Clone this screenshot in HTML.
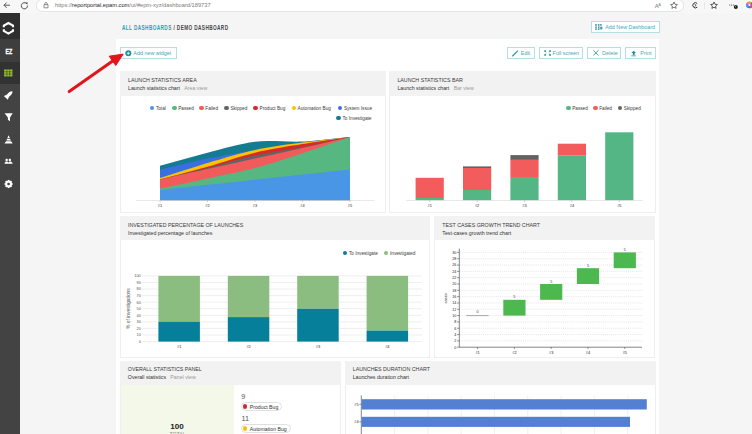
<!DOCTYPE html>
<html><head><meta charset="utf-8">
<style>
*{margin:0;padding:0;box-sizing:border-box}
html,body{width:752px;height:434px;overflow:hidden;background:#f5f5f5;font-family:"Liberation Sans",sans-serif;position:relative}
.a{position:absolute;white-space:nowrap}
#toolbar{left:0;top:0;width:752px;height:13px;background:#f7f7f7}
#pill{left:36px;top:-0.6px;width:647.5px;height:12.4px;background:#fff;border-radius:6px;border:1px solid #e4e4e4}
#url{left:55px;top:1px;font-size:5.7px;line-height:8px;color:#7a7a7a}
#url b{color:#1e1e1e;font-weight:normal}
#sidebar{left:0;top:13.4px;width:19.5px;height:421px;background:#434343}
#panel{left:116px;top:39px;width:543px;height:395px;background:#fff}
.btn{position:absolute;height:12px;border:1px solid #b8dee5;background:#fff;color:#48a7ba;font-size:5.4px;line-height:10px;white-space:nowrap}
.btn svg{position:absolute}
.btn span{position:absolute;top:0}
.w{position:absolute;background:#fff;border:1px solid #efefef}
.wh{position:absolute;left:-1px;top:-1px;right:-1px;height:25px;background:#f2f2f2}
.wt{position:absolute;left:7px;top:4.6px;font-size:5.3px;line-height:7px;color:#3a3a3a;white-space:nowrap}
.ws{position:absolute;left:7px;top:12.7px;font-size:5.25px;line-height:7px;color:#333;white-space:nowrap}
.ws span{color:#9a9a9a;margin-left:4.3px}
.lg{position:absolute;font-size:4.7px;line-height:6px;color:#3a3a3a;white-space:nowrap;margin-top:0.9px}
.dot{position:absolute;width:4.4px;height:4.4px;border-radius:50%;margin:-0.2px 0 0 -0.2px}
svg.c{position:absolute;left:0;top:0;width:752px;height:434px}
.t4{font-size:3.6px;fill:#444;font-family:"Liberation Sans",sans-serif}
</style></head><body>
<div id="toolbar" class="a"></div>
<div id="pill" class="a"></div>
<div id="url" class="a">https://<b>reportportal.epam.com</b>/ui/#epm-xyz/dashboard/189737</div>
<svg class="c" style="z-index:2">
  <!-- back arrow -->
  <path d="M4,5.2H10M4,5.2L6.6,2.6M4,5.2L6.6,7.8" stroke="#444" stroke-width="0.9" fill="none"/>
  <!-- reload -->
  <path d="M26.6,3.6A3.1,3.1 0 1 0 27.5,5.6" stroke="#444" stroke-width="0.9" fill="none"/>
  <path d="M25.2,2.6L27.6,2.4L27.4,4.8Z" fill="#444"/>
  <!-- lock -->
  <path d="M44,4.6h4v3.2h-4z" stroke="#666" stroke-width="0.7" fill="none"/>
  <path d="M44.8,4.6v-0.9a1.2,1.2 0 0 1 2.4,0v0.9" stroke="#666" stroke-width="0.7" fill="none"/>
  <!-- A aa -->
  <text x="654.8" y="8.3" font-size="6" fill="#777" font-family="Liberation Sans">A</text>
  <text x="658.6" y="5.6" font-size="3.5" fill="#777" font-family="Liberation Sans">A</text>
  <!-- star -->
  <path d="M674,2L675,4.3L677.4,4.5L675.6,6.1L676.1,8.4L674,7.2L671.9,8.4L672.4,6.1L670.6,4.5L673,4.3Z" stroke="#444" stroke-width="0.7" fill="none"/>
  <!-- icon -->
  <path d="M697.2,3.4A2.6,2.6 0 1 0 697.2,7.2" stroke="#333" stroke-width="1" fill="none"/>
  <path d="M694.6,4.2L696.2,5.3L694.6,6.4" stroke="#333" stroke-width="0.8" fill="none"/>
  <line x1="704.5" y1="2" x2="704.5" y2="9" stroke="#ddd" stroke-width="0.6"/>
  <!-- star list -->
  <path d="M714,2L715,4.3L717.4,4.5L715.6,6.1L716.1,8.4L714,7.2L711.9,8.4L712.4,6.1L710.6,4.5L713,4.3Z" stroke="#333" stroke-width="0.8" fill="none"/>
  <!-- dots -->
  <circle cx="729.8" cy="5" r="0.55" fill="#333"/><circle cx="731.6" cy="5" r="0.55" fill="#333"/><circle cx="733.4" cy="5" r="0.55" fill="#333"/>
  <circle cx="735.8" cy="7" r="2" fill="#1a1a1a"/><rect x="735.55" y="5.8" width="0.5" height="1.5" fill="#fff"/>
  <!-- copilot -->
  <circle cx="749.5" cy="5" r="3.3" fill="#7b5cf0"/>
  <path d="M746.5,3.5A3.3,3.3 0 0 1 751.5,2.3L749.5,5Z" fill="#f0a020"/>
  <path d="M752.5,4A3.3,3.3 0 0 1 750.5,8.2L749.5,5Z" fill="#e83e8c"/>
  <path d="M748,8A3.3,3.3 0 0 1 746.3,4.6L749.5,5Z" fill="#2ea0f0"/>
  <circle cx="749.5" cy="5" r="1.1" fill="#fff"/>
</svg>

<div id="sidebar" class="a">
  <div class="a" style="left:0;top:0;width:20px;height:25.5px;background:#2f2f2f"></div>
  <div class="a" style="left:0;top:25.5px;width:20px;height:23px;background:#3e3e3e"></div>
  <div class="a" style="left:0;top:48.5px;width:20px;height:22.2px;background:#323232"></div>
</div>
<svg class="c" style="z-index:2">
  <!-- logo -->
  <path d="M3.8,27.3V25.7L8.4,23L13,25.7V27.3M3.8,29.2V30.9L8.4,33.6L13,30.9V29.2" fill="none" stroke="#fff" stroke-width="2.1" stroke-linejoin="miter"/>
  <!-- EZ -->
  <text x="0" y="0" font-size="7.2" font-weight="bold" fill="#fff" stroke="#fff" stroke-width="0.35" text-anchor="middle" font-family="Liberation Sans" transform="translate(8.8,53.9) scale(0.74,1)">EZ</text>
  <!-- grid -->
  <g fill="#9cc43a">
    <rect x="4.1" y="69.5" width="8.3" height="6.9"/>
  </g>
  <g stroke="#35401c" stroke-width="0.6">
    <line x1="6.9" y1="69.5" x2="6.9" y2="76.4"/><line x1="9.65" y1="69.5" x2="9.65" y2="76.4"/>
    <line x1="4.1" y1="71.8" x2="12.4" y2="71.8"/><line x1="4.1" y1="74.1" x2="12.4" y2="74.1"/>
  </g>
  <!-- rocket -->
  <g transform="translate(8.7,95) rotate(45) scale(0.92)">
    <path d="M0,-5.8C1.9,-4.2 2,-1.2 1.7,1.4L3,4.4H-3L-1.7,1.4C-2,-1.2 -1.9,-4.2 0,-5.8Z" fill="#fff"/>
  </g>
  <!-- filter -->
  <path d="M4.6,113.3H12.7L10,117.4V121.2L7.9,119.8V117.4Z" fill="#fff"/>
  <!-- pyramid -->
  <path d="M8.6,135.3L9.8,138H7.4Z M7.1,138.8H10.1L10.8,140.6H6.4Z M6.1,141.3H11.1L12.7,143.5H4.5Z" fill="#fff"/>
  <!-- people -->
  <rect x="5.6" y="158.8" width="2.1" height="2.2" rx="0.6" fill="#fff"/><rect x="8.8" y="158.8" width="2.1" height="2.2" rx="0.6" fill="#fff"/>
  <path d="M4.6,163.7C4.7,162.1 5.6,161.6 6.6,161.6C7.6,161.6 8.5,162.1 8.6,163.7Z M8.3,163.7C8.4,162.1 9.3,161.6 10.2,161.6C11.2,161.6 12.1,162.1 12.7,163.7Z" fill="#fff"/>
  <!-- gear -->
  <g transform="translate(8.6,184)">
    <circle r="2.45" fill="none" stroke="#fff" stroke-width="1.9"/>
    <g fill="#fff"><rect x="-0.8" y="-4.1" width="1.6" height="8.2"/><rect x="-0.8" y="-4.1" width="1.6" height="8.2" transform="rotate(45)"/><rect x="-0.8" y="-4.1" width="1.6" height="8.2" transform="rotate(90)"/><rect x="-0.8" y="-4.1" width="1.6" height="8.2" transform="rotate(135)"/></g>
    <circle r="1.35" fill="#434343"/>
  </g>
</svg>

<div id="panel" class="a"></div>

<div class="a" style="left:121.7px;top:23.5px;font-size:6.3px;line-height:8px;font-weight:bold;color:#474747;transform-origin:0 0;transform:scaleX(0.745);letter-spacing:0.55px"><span style="color:#2a9fb6">ALL DASHBOARDS</span> / DEMO DASHBOARD</div>

<div class="btn" style="left:591px;top:21.2px;width:69px;height:11.6px">
  <svg style="left:3.2px;top:2px" width="10" height="8"><g fill="#2a8597"><rect x="0.2" y="0.2" width="1.6" height="1.5"/><rect x="2.9" y="0.2" width="1.6" height="1.5"/><rect x="5.1" y="0.2" width="1.6" height="1.5"/><rect x="0.2" y="2.5" width="1.6" height="1.3"/><rect x="2.9" y="2.5" width="1.6" height="1.3"/><rect x="0.2" y="4.4" width="1.6" height="1.4"/><rect x="2.9" y="4.4" width="1.6" height="1.4"/><path d="M5.6,2.5H6.6V3.6H7.8V4.6H6.6V5.8H5.6V4.6H4.9V3.6H5.6Z"/></g></svg>
  <span style="left:13.2px">Add New Dashboard</span></div>
<div class="btn" style="left:120px;top:47px;width:57px;height:11.8px">
  <svg style="left:3.5px;top:1.5px" width="7" height="7"><circle cx="3.3" cy="3.3" r="3" fill="#1d8da3"/><path d="M3.3,1.8V4.8M1.8,3.3H4.8" stroke="#fff" stroke-width="0.8"/></svg>
  <span style="left:12.3px">Add new widget</span></div>
<div class="btn" style="left:507px;top:47px;width:28px;height:12px">
  <svg style="left:3.8px;top:1.5px" width="8" height="8"><path d="M0.7,5.9L4.7,1.9" stroke="#1d8da3" stroke-width="1.3" stroke-linecap="round"/><path d="M5.2,1.4L5.9,0.7" stroke="#1d8da3" stroke-width="1.1"/></svg>
  <span style="left:12.8px">Edit</span></div>
<div class="btn" style="left:538.5px;top:47px;width:44.5px;height:12px">
  <svg style="left:4px;top:1.5px" width="8" height="7"><g fill="#1d8da3"><path d="M0.3,0.3H2.3L1.6,1L2.5,1.9L1.9,2.5L1,1.6L0.3,2.3Z"/><path d="M6.9,0.3H4.9L5.6,1L4.7,1.9L5.3,2.5L6.2,1.6L6.9,2.3Z"/><path d="M0.3,5.7H2.3L1.6,5L2.5,4.1L1.9,3.5L1,4.4L0.3,3.7Z"/><path d="M6.9,5.7H4.9L5.6,5L4.7,4.1L5.3,3.5L6.2,4.4L6.9,3.7Z"/></g></svg>
  <span style="left:13.1px">Full screen</span></div>
<div class="btn" style="left:587.3px;top:47px;width:34px;height:12px">
  <svg style="left:4.6px;top:2.1px" width="7" height="7"><path d="M0.3,0.3L5.4,5.5M5.4,0.3L0.3,5.5" stroke="#1d8da3" stroke-width="0.8"/></svg>
  <span style="left:13.8px">Delete</span></div>
<div class="btn" style="left:625.3px;top:47px;width:30.6px;height:11.6px">
  <svg style="left:5px;top:1.6px" width="7" height="7"><path d="M2.7,0.7L5,3H3.6V4.9H1.8V3H0.4Z" fill="#1d8da3"/><rect x="0.3" y="5.5" width="4.8" height="0.75" fill="#1d8da3"/></svg>
  <span style="left:14px">Print</span></div>

<!-- arrow -->
<svg class="c" style="z-index:3">
  <line x1="69.2" y1="91.6" x2="113" y2="60.8" stroke="#e3141a" stroke-width="3" stroke-linecap="round"/>
  <path d="M123.2,54.1L109.2,56.2L115.8,65.5Z" fill="#e3141a" stroke="#e3141a" stroke-width="1" stroke-linejoin="round"/>
</svg>

<!-- W1 -->
<div class="w" style="left:120px;top:71px;width:266px;height:142px"><div class="wh"></div><div class="wt">LAUNCH STATISTICS AREA</div><div class="ws">Launch statistics chart<span>Area view</span></div></div>
<!-- W2 -->
<div class="w" style="left:389.4px;top:71px;width:266.2px;height:141.6px"><div class="wh"></div><div class="wt">LAUNCH STATISTICS BAR</div><div class="ws">Launch statistics chart<span>Bar view</span></div></div>
<!-- W3 -->
<div class="w" style="left:120px;top:216px;width:310.4px;height:142px"><div class="wh" style="height:24px"></div><div class="wt">INVESTIGATED PERCENTAGE OF LAUNCHES</div><div class="ws">Investigated percentage of launches</div></div>
<!-- W4 -->
<div class="w" style="left:434.3px;top:216px;width:221px;height:142px"><div class="wh" style="height:24px"></div><div class="wt">TEST CASES GROWTH TREND CHART</div><div class="ws">Test-cases growth trend chart</div></div>
<!-- W5 -->
<div class="w" style="left:119.8px;top:360.6px;width:220.8px;height:80px"><div class="wh" style="height:24.1px"></div><div class="wt" style="top:4.3px">OVERALL STATISTICS PANEL</div><div class="ws" style="top:12.3px">Overall statistics<span>Panel view</span></div></div>
<!-- W6 -->
<div class="w" style="left:344.7px;top:360.6px;width:311px;height:80px"><div class="wh" style="height:24.1px"></div><div class="wt" style="top:4.3px">LAUNCHES DURATION CHART</div><div class="ws" style="top:12.3px">Launches duration chart</div></div>


<!-- legends -->
<div class="dot" style="left:149.9px;top:106px;background:#4a96e6"></div><div class="lg" style="left:155.9px;top:105px">Total</div>
<div class="dot" style="left:172.5px;top:106px;background:#57b780"></div><div class="lg" style="left:178.2px;top:105px">Passed</div>
<div class="dot" style="left:199.6px;top:106px;background:#f25b5b"></div><div class="lg" style="left:205.3px;top:105px">Failed</div>
<div class="dot" style="left:224.4px;top:106px;background:#646464"></div><div class="lg" style="left:230.4px;top:105px">Skipped</div>
<div class="dot" style="left:253.5px;top:106px;background:#d42a2a"></div><div class="lg" style="left:259.5px;top:105px">Product Bug</div>
<div class="dot" style="left:291.7px;top:106px;background:#fbc200"></div><div class="lg" style="left:297.5px;top:105px">Automation Bug</div>
<div class="dot" style="left:337.9px;top:106px;background:#3a6fe2"></div><div class="lg" style="left:343.9px;top:105px">System Issue</div>
<div class="dot" style="left:336.5px;top:116.2px;background:#137c91"></div><div class="lg" style="left:342.5px;top:115.2px">To Investigate</div>

<div class="dot" style="left:566.4px;top:106px;background:#55b685"></div><div class="lg" style="left:572.2px;top:105px">Passed</div>
<div class="dot" style="left:593.4px;top:106px;background:#f25c5c"></div><div class="lg" style="left:599.2px;top:105px">Failed</div>
<div class="dot" style="left:618px;top:106px;background:#626262"></div><div class="lg" style="left:623.8px;top:105px">Skipped</div>

<div class="dot" style="left:343.1px;top:250.7px;background:#06809a"></div><div class="lg" style="left:348.9px;top:249.7px">To Investigate</div>
<div class="dot" style="left:384.2px;top:250.7px;background:#8bbc80"></div><div class="lg" style="left:390px;top:249.7px">Investigated</div>

<!-- overall stats -->
<div class="a" style="left:120.8px;top:384.6px;width:113px;height:50px;background:#f3f8e9"></div>
<div class="a" style="left:170.2px;top:421.8px;font-size:8.1px;line-height:9px;font-weight:bold;color:#222">100</div>
<div class="a" style="left:169.8px;top:431.8px;font-size:4.6px;line-height:6px;color:#888;letter-spacing:0.3px">TOTAL</div>
<div class="a" style="left:241.3px;top:392.6px;font-size:7.2px;line-height:8px;color:#555">9</div>
<div class="a" style="left:241.3px;top:402.3px;width:40.5px;height:9.2px;border:0.7px solid #e0e0e0;border-radius:5px;background:#fff"></div>
<div class="dot" style="left:243.4px;top:404.5px;width:4.2px;height:4.2px;background:#d42a2a"></div>
<div class="a" style="left:249.8px;top:403.5px;font-size:5.2px;line-height:7px;color:#333">Product Bug</div>
<div class="a" style="left:241.4px;top:414.8px;font-size:7.3px;line-height:8px;color:#555">11</div>
<div class="a" style="left:241.3px;top:424px;width:49.3px;height:9.4px;border:0.7px solid #e0e0e0;border-radius:5px;background:#fff"></div>
<div class="dot" style="left:243.4px;top:426.5px;width:4.2px;height:4.2px;background:#fbc200"></div>
<div class="a" style="left:249.8px;top:425.5px;font-size:5.2px;line-height:7px;color:#333">Automation Bug</div>

<!-- charts -->
<svg class="c" style="z-index:4">
<path fill="#137c91" d="M160,165.8Q198,155.11,207.5,152.7C221.75,149.08,240.75,143.36,255,141.7S288.25,142.31,302.5,141.6Q312,141.13,350,137L350,200.5L160,200.5Z"/>
<path fill="#3a6fe2" d="M160,169.7Q198,160.58,207.5,158.6C221.75,155.63,240.75,152.33,255,149.9S288.25,144.34,302.5,142.4Q312,141.11,350,137L350,200.5L160,200.5Z"/>
<path fill="#fbc200" d="M160,177.9Q198,165.7,207.5,162.9C221.75,158.7,240.75,152.95,255,149.9S288.25,144.53,302.5,142.6Q312,141.31,350,137L350,200.5L160,200.5Z"/>
<path fill="#d42a2a" d="M160,179.4Q198,169.37,207.5,166.7C221.75,162.69,240.75,156.09,255,152.7S288.25,146.45,302.5,144.1Q312,142.53,350,137L350,200.5L160,200.5Z"/>
<path fill="#646464" d="M160,179.4Q198,170.38,207.5,168C221.75,164.43,240.75,158.72,255,155.6S288.25,149.99,302.5,147.2Q312,145.34,350,137L350,200.5L160,200.5Z"/>
<path fill="#f25b5b" d="M160,179.4Q198,171.19,207.5,169.1C221.75,165.97,240.75,161.66,255,158.5S288.25,151.22,302.5,148Q312,145.85,350,137L350,200.5L160,200.5Z"/>
<path fill="#57b780" d="M160,188.6Q198,180.56,207.5,178.5C221.75,175.41,240.75,171.8,255,168S288.25,157.85,302.5,153.2Q312,150.1,350,137L350,200.5L160,200.5Z"/>
<path fill="#4a96e6" d="M160,190Q198,185.88,207.5,184.85C221.75,183.3,240.75,181.24,255,179.7S288.25,176.09,302.5,174.55Q312,173.52,350,169.4L350,200.5L160,200.5Z"/>
<line x1="136" y1="200.5" x2="374" y2="200.5" stroke="#dedede" stroke-width="0.7"/>
<line x1="160" y1="200.5" x2="160" y2="202" stroke="#999" stroke-width="0.5"/>
<text x="160" y="207" font-size="3.9" fill="#222" text-anchor="middle" font-family="Liberation Sans">#1</text>
<line x1="207.5" y1="200.5" x2="207.5" y2="202" stroke="#999" stroke-width="0.5"/>
<text x="207.5" y="207" font-size="3.9" fill="#222" text-anchor="middle" font-family="Liberation Sans">#2</text>
<line x1="255" y1="200.5" x2="255" y2="202" stroke="#999" stroke-width="0.5"/>
<text x="255" y="207" font-size="3.9" fill="#222" text-anchor="middle" font-family="Liberation Sans">#3</text>
<line x1="302.5" y1="200.5" x2="302.5" y2="202" stroke="#999" stroke-width="0.5"/>
<text x="302.5" y="207" font-size="3.9" fill="#222" text-anchor="middle" font-family="Liberation Sans">#4</text>
<line x1="350" y1="200.5" x2="350" y2="202" stroke="#999" stroke-width="0.5"/>
<text x="350" y="207" font-size="3.9" fill="#222" text-anchor="middle" font-family="Liberation Sans">#5</text>
<rect x="415.6" y="177.8" width="28.2" height="20.2" fill="#f25c5c"/>
<rect x="415.6" y="198" width="28.2" height="2.4" fill="#55b685"/>
<rect x="463" y="166.4" width="28.2" height="1.6" fill="#626262"/>
<rect x="463" y="168" width="28.2" height="22" fill="#f25c5c"/>
<rect x="463" y="190" width="28.2" height="10.4" fill="#55b685"/>
<rect x="510.4" y="155.1" width="28.2" height="4.8" fill="#626262"/>
<rect x="510.4" y="159.9" width="28.2" height="18" fill="#f25c5c"/>
<rect x="510.4" y="177.9" width="28.2" height="22.5" fill="#55b685"/>
<rect x="557.8" y="143.7" width="28.2" height="12" fill="#f25c5c"/>
<rect x="557.8" y="155.7" width="28.2" height="44.7" fill="#55b685"/>
<rect x="605.2" y="132.3" width="28.2" height="68.1" fill="#55b685"/>
<line x1="406" y1="200.5" x2="643" y2="200.5" stroke="#dedede" stroke-width="0.7"/>
<line x1="429.7" y1="200.5" x2="429.7" y2="202" stroke="#999" stroke-width="0.5"/>
<text x="429.7" y="207" font-size="3.9" fill="#222" text-anchor="middle" font-family="Liberation Sans">#1</text>
<line x1="477.1" y1="200.5" x2="477.1" y2="202" stroke="#999" stroke-width="0.5"/>
<text x="477.1" y="207" font-size="3.9" fill="#222" text-anchor="middle" font-family="Liberation Sans">#2</text>
<line x1="524.5" y1="200.5" x2="524.5" y2="202" stroke="#999" stroke-width="0.5"/>
<text x="524.5" y="207" font-size="3.9" fill="#222" text-anchor="middle" font-family="Liberation Sans">#3</text>
<line x1="571.9" y1="200.5" x2="571.9" y2="202" stroke="#999" stroke-width="0.5"/>
<text x="571.9" y="207" font-size="3.9" fill="#222" text-anchor="middle" font-family="Liberation Sans">#4</text>
<line x1="619.3" y1="200.5" x2="619.3" y2="202" stroke="#999" stroke-width="0.5"/>
<text x="619.3" y="207" font-size="3.9" fill="#222" text-anchor="middle" font-family="Liberation Sans">#5</text>
<line x1="142" y1="341.6" x2="422" y2="341.6" stroke="#e3e3e3" stroke-width="0.6"/>
<text x="140.8" y="343" font-size="3.9" fill="#555" text-anchor="end" font-family="Liberation Sans">0</text>
<line x1="142" y1="335.03" x2="422" y2="335.03" stroke="#e3e3e3" stroke-width="0.6"/>
<text x="140.8" y="336.43" font-size="3.9" fill="#555" text-anchor="end" font-family="Liberation Sans">10</text>
<line x1="142" y1="328.46" x2="422" y2="328.46" stroke="#e3e3e3" stroke-width="0.6"/>
<text x="140.8" y="329.86" font-size="3.9" fill="#555" text-anchor="end" font-family="Liberation Sans">20</text>
<line x1="142" y1="321.89" x2="422" y2="321.89" stroke="#e3e3e3" stroke-width="0.6"/>
<text x="140.8" y="323.29" font-size="3.9" fill="#555" text-anchor="end" font-family="Liberation Sans">30</text>
<line x1="142" y1="315.32" x2="422" y2="315.32" stroke="#e3e3e3" stroke-width="0.6"/>
<text x="140.8" y="316.72" font-size="3.9" fill="#555" text-anchor="end" font-family="Liberation Sans">40</text>
<line x1="142" y1="308.75" x2="422" y2="308.75" stroke="#e3e3e3" stroke-width="0.6"/>
<text x="140.8" y="310.15" font-size="3.9" fill="#555" text-anchor="end" font-family="Liberation Sans">50</text>
<line x1="142" y1="302.18" x2="422" y2="302.18" stroke="#e3e3e3" stroke-width="0.6"/>
<text x="140.8" y="303.58" font-size="3.9" fill="#555" text-anchor="end" font-family="Liberation Sans">60</text>
<line x1="142" y1="295.61" x2="422" y2="295.61" stroke="#e3e3e3" stroke-width="0.6"/>
<text x="140.8" y="297.01" font-size="3.9" fill="#555" text-anchor="end" font-family="Liberation Sans">70</text>
<line x1="142" y1="289.04" x2="422" y2="289.04" stroke="#e3e3e3" stroke-width="0.6"/>
<text x="140.8" y="290.44" font-size="3.9" fill="#555" text-anchor="end" font-family="Liberation Sans">80</text>
<line x1="142" y1="282.47" x2="422" y2="282.47" stroke="#e3e3e3" stroke-width="0.6"/>
<text x="140.8" y="283.87" font-size="3.9" fill="#555" text-anchor="end" font-family="Liberation Sans">90</text>
<line x1="142" y1="275.9" x2="422" y2="275.9" stroke="#e3e3e3" stroke-width="0.6"/>
<text x="140.8" y="277.3" font-size="3.9" fill="#555" text-anchor="end" font-family="Liberation Sans">100</text>
<rect x="158.4" y="275.9" width="41.5" height="45.8" fill="#8bbc80"/>
<rect x="158.4" y="321.7" width="41.5" height="19.9" fill="#06809a"/>
<text x="179.15" y="348.3" font-size="3.9" fill="#222" text-anchor="middle" font-family="Liberation Sans">#1</text>
<rect x="227.8" y="275.9" width="41.5" height="41.2" fill="#8bbc80"/>
<rect x="227.8" y="317.1" width="41.5" height="24.5" fill="#06809a"/>
<text x="248.55" y="348.3" font-size="3.9" fill="#222" text-anchor="middle" font-family="Liberation Sans">#2</text>
<rect x="297.2" y="275.9" width="41.5" height="32.9" fill="#8bbc80"/>
<rect x="297.2" y="308.8" width="41.5" height="32.8" fill="#06809a"/>
<text x="317.95" y="348.3" font-size="3.9" fill="#222" text-anchor="middle" font-family="Liberation Sans">#3</text>
<rect x="366.6" y="275.9" width="41.5" height="54.7" fill="#8bbc80"/>
<rect x="366.6" y="330.6" width="41.5" height="11" fill="#06809a"/>
<text x="387.35" y="348.3" font-size="3.9" fill="#222" text-anchor="middle" font-family="Liberation Sans">#4</text>
<text x="0" y="0" font-size="4.9" fill="#555" text-anchor="middle" font-family="Liberation Sans" transform="translate(129.6,308.6) rotate(-90)">% of investigations</text>
<g stroke="#cfcfcf" stroke-width="0.55" stroke-dasharray="1,1.1">
<line x1="460" y1="340.88" x2="643" y2="340.88"/>
<line x1="460" y1="334.56" x2="643" y2="334.56"/>
<line x1="460" y1="328.24" x2="643" y2="328.24"/>
<line x1="460" y1="321.92" x2="643" y2="321.92"/>
<line x1="460" y1="315.6" x2="643" y2="315.6"/>
<line x1="460" y1="309.28" x2="643" y2="309.28"/>
<line x1="460" y1="302.96" x2="643" y2="302.96"/>
<line x1="460" y1="296.64" x2="643" y2="296.64"/>
<line x1="460" y1="290.32" x2="643" y2="290.32"/>
<line x1="460" y1="284" x2="643" y2="284"/>
<line x1="460" y1="277.68" x2="643" y2="277.68"/>
<line x1="460" y1="271.36" x2="643" y2="271.36"/>
<line x1="460" y1="265.04" x2="643" y2="265.04"/>
<line x1="460" y1="258.72" x2="643" y2="258.72"/>
<line x1="460" y1="252.4" x2="643" y2="252.4"/>
</g>
<line x1="459.3" y1="248.6" x2="459.3" y2="347.2" stroke="#333" stroke-width="0.6"/>
<line x1="459.3" y1="347.2" x2="642" y2="347.2" stroke="#333" stroke-width="0.6"/>
<line x1="457" y1="347.2" x2="459.3" y2="347.2" stroke="#333" stroke-width="0.5"/>
<text x="456.3" y="348.55" font-size="3.7" fill="#1a1a1a" text-anchor="end" font-family="Liberation Sans">0</text>
<line x1="457" y1="340.88" x2="459.3" y2="340.88" stroke="#333" stroke-width="0.5"/>
<text x="456.3" y="342.23" font-size="3.7" fill="#1a1a1a" text-anchor="end" font-family="Liberation Sans">2</text>
<line x1="457" y1="334.56" x2="459.3" y2="334.56" stroke="#333" stroke-width="0.5"/>
<text x="456.3" y="335.91" font-size="3.7" fill="#1a1a1a" text-anchor="end" font-family="Liberation Sans">4</text>
<line x1="457" y1="328.24" x2="459.3" y2="328.24" stroke="#333" stroke-width="0.5"/>
<text x="456.3" y="329.59" font-size="3.7" fill="#1a1a1a" text-anchor="end" font-family="Liberation Sans">6</text>
<line x1="457" y1="321.92" x2="459.3" y2="321.92" stroke="#333" stroke-width="0.5"/>
<text x="456.3" y="323.27" font-size="3.7" fill="#1a1a1a" text-anchor="end" font-family="Liberation Sans">8</text>
<line x1="457" y1="315.6" x2="459.3" y2="315.6" stroke="#333" stroke-width="0.5"/>
<text x="456.3" y="316.95" font-size="3.7" fill="#1a1a1a" text-anchor="end" font-family="Liberation Sans">10</text>
<line x1="457" y1="309.28" x2="459.3" y2="309.28" stroke="#333" stroke-width="0.5"/>
<text x="456.3" y="310.63" font-size="3.7" fill="#1a1a1a" text-anchor="end" font-family="Liberation Sans">12</text>
<line x1="457" y1="302.96" x2="459.3" y2="302.96" stroke="#333" stroke-width="0.5"/>
<text x="456.3" y="304.31" font-size="3.7" fill="#1a1a1a" text-anchor="end" font-family="Liberation Sans">14</text>
<line x1="457" y1="296.64" x2="459.3" y2="296.64" stroke="#333" stroke-width="0.5"/>
<text x="456.3" y="297.99" font-size="3.7" fill="#1a1a1a" text-anchor="end" font-family="Liberation Sans">16</text>
<line x1="457" y1="290.32" x2="459.3" y2="290.32" stroke="#333" stroke-width="0.5"/>
<text x="456.3" y="291.67" font-size="3.7" fill="#1a1a1a" text-anchor="end" font-family="Liberation Sans">18</text>
<line x1="457" y1="284" x2="459.3" y2="284" stroke="#333" stroke-width="0.5"/>
<text x="456.3" y="285.35" font-size="3.7" fill="#1a1a1a" text-anchor="end" font-family="Liberation Sans">20</text>
<line x1="457" y1="277.68" x2="459.3" y2="277.68" stroke="#333" stroke-width="0.5"/>
<text x="456.3" y="279.03" font-size="3.7" fill="#1a1a1a" text-anchor="end" font-family="Liberation Sans">22</text>
<line x1="457" y1="271.36" x2="459.3" y2="271.36" stroke="#333" stroke-width="0.5"/>
<text x="456.3" y="272.71" font-size="3.7" fill="#1a1a1a" text-anchor="end" font-family="Liberation Sans">24</text>
<line x1="457" y1="265.04" x2="459.3" y2="265.04" stroke="#333" stroke-width="0.5"/>
<text x="456.3" y="266.39" font-size="3.7" fill="#1a1a1a" text-anchor="end" font-family="Liberation Sans">26</text>
<line x1="457" y1="258.72" x2="459.3" y2="258.72" stroke="#333" stroke-width="0.5"/>
<text x="456.3" y="260.07" font-size="3.7" fill="#1a1a1a" text-anchor="end" font-family="Liberation Sans">28</text>
<line x1="457" y1="252.4" x2="459.3" y2="252.4" stroke="#333" stroke-width="0.5"/>
<text x="456.3" y="253.75" font-size="3.7" fill="#1a1a1a" text-anchor="end" font-family="Liberation Sans">30</text>
<text x="0" y="0" font-size="4" fill="#1a1a1a" text-anchor="middle" font-family="Liberation Sans" transform="translate(447,298.2) rotate(-90)">cases</text>
<line x1="477.6" y1="347.2" x2="477.6" y2="349" stroke="#333" stroke-width="0.5"/>
<text x="477.6" y="353.8" font-size="3.9" fill="#1a1a1a" text-anchor="middle" font-family="Liberation Sans">#1</text>
<line x1="466.3" y1="315.6" x2="488.6" y2="315.6" stroke="#888" stroke-width="0.7"/>
<text x="477.6" y="313.4" font-size="3.7" fill="#333" text-anchor="middle" font-family="Liberation Sans">0</text>
<line x1="514.4" y1="347.2" x2="514.4" y2="349" stroke="#333" stroke-width="0.5"/>
<text x="514.4" y="353.8" font-size="3.9" fill="#1a1a1a" text-anchor="middle" font-family="Liberation Sans">#2</text>
<rect x="503.3" y="299.8" width="22.2" height="15.8" fill="#4cb84e"/>
<text x="514.4" y="298.4" font-size="3.7" fill="#333" text-anchor="middle" font-family="Liberation Sans">5</text>
<line x1="551.2" y1="347.2" x2="551.2" y2="349" stroke="#333" stroke-width="0.5"/>
<text x="551.2" y="353.8" font-size="3.9" fill="#1a1a1a" text-anchor="middle" font-family="Liberation Sans">#3</text>
<rect x="540.1" y="284" width="22.2" height="15.8" fill="#4cb84e"/>
<text x="551.2" y="282.6" font-size="3.7" fill="#333" text-anchor="middle" font-family="Liberation Sans">5</text>
<line x1="588" y1="347.2" x2="588" y2="349" stroke="#333" stroke-width="0.5"/>
<text x="588" y="353.8" font-size="3.9" fill="#1a1a1a" text-anchor="middle" font-family="Liberation Sans">#4</text>
<rect x="576.9" y="268.2" width="22.2" height="15.8" fill="#4cb84e"/>
<text x="588" y="266.8" font-size="3.7" fill="#333" text-anchor="middle" font-family="Liberation Sans">5</text>
<line x1="624.8" y1="347.2" x2="624.8" y2="349" stroke="#333" stroke-width="0.5"/>
<text x="624.8" y="353.8" font-size="3.9" fill="#1a1a1a" text-anchor="middle" font-family="Liberation Sans">#5</text>
<rect x="613.7" y="252.4" width="22.2" height="15.8" fill="#4cb84e"/>
<text x="624.8" y="251" font-size="3.7" fill="#333" text-anchor="middle" font-family="Liberation Sans">5</text>
<line x1="361.3" y1="395.4" x2="361.3" y2="434" stroke="#333" stroke-width="0.6"/>
<line x1="394.6" y1="395.4" x2="394.6" y2="434" stroke="#e0e0e0" stroke-width="0.5"/>
<line x1="427.9" y1="395.4" x2="427.9" y2="434" stroke="#e0e0e0" stroke-width="0.5"/>
<line x1="461.2" y1="395.4" x2="461.2" y2="434" stroke="#e0e0e0" stroke-width="0.5"/>
<line x1="494.5" y1="395.4" x2="494.5" y2="434" stroke="#e0e0e0" stroke-width="0.5"/>
<line x1="527.8" y1="395.4" x2="527.8" y2="434" stroke="#e0e0e0" stroke-width="0.5"/>
<line x1="561.1" y1="395.4" x2="561.1" y2="434" stroke="#e0e0e0" stroke-width="0.5"/>
<line x1="594.4" y1="395.4" x2="594.4" y2="434" stroke="#e0e0e0" stroke-width="0.5"/>
<line x1="627.7" y1="395.4" x2="627.7" y2="434" stroke="#e0e0e0" stroke-width="0.5"/>
<rect x="361.6" y="399.2" width="285.2" height="10.3" fill="#5380d3"/>
<rect x="361.6" y="416.8" width="268.4" height="10.1" fill="#5380d3"/>
<line x1="359.3" y1="404.3" x2="361.3" y2="404.3" stroke="#333" stroke-width="0.5"/>
<text x="358.6" y="405.6" font-size="3.8" fill="#1a1a1a" text-anchor="end" font-family="Liberation Sans">#5</text>
<line x1="359.3" y1="421.8" x2="361.3" y2="421.8" stroke="#333" stroke-width="0.5"/>
<text x="358.6" y="423.1" font-size="3.8" fill="#1a1a1a" text-anchor="end" font-family="Liberation Sans">#4</text>
</svg>

</body></html>
